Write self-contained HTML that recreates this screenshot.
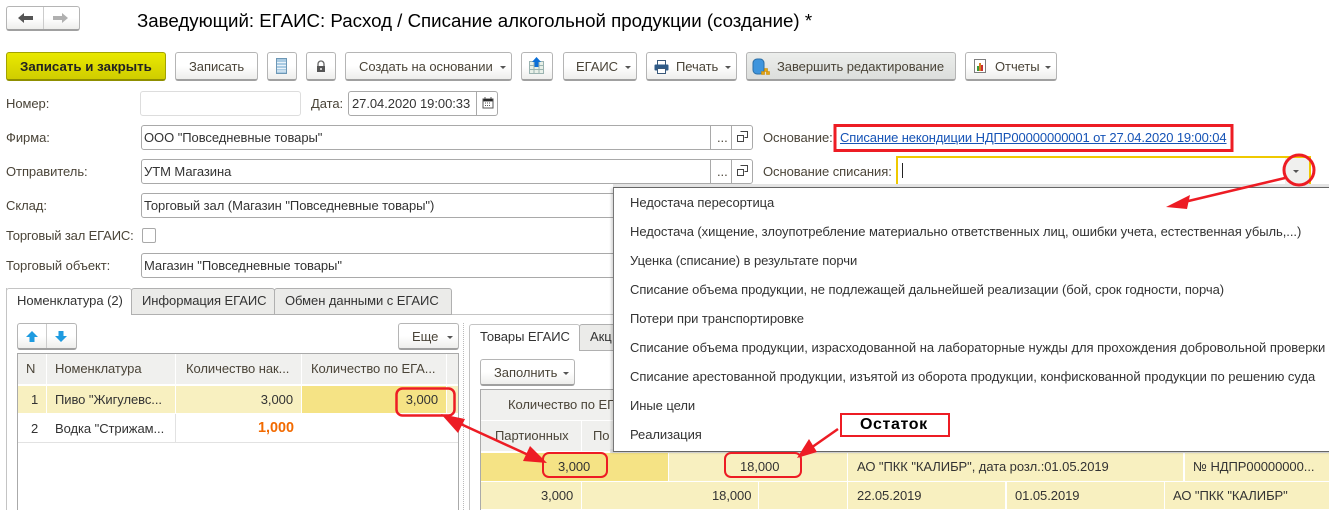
<!DOCTYPE html>
<html><head><meta charset="utf-8"><style>
html,body{margin:0;padding:0;background:#fff;}
#p{position:relative;width:1329px;height:510px;overflow:hidden;background:#fff;font-family:"Liberation Sans",sans-serif;font-size:13px;color:#4a4438;}
#p div,#p span.t{position:absolute;box-sizing:border-box;}
.t{white-space:nowrap;line-height:14px;letter-spacing:-.06px;}
.v{color:#333;}
.b{border:1px solid #b5b5b5;border-bottom:2px solid #a0a0a0;border-radius:3px;background:linear-gradient(#fff,#fff 50%,#eeeeec);}
.f{border:1px solid #a9a9a9;border-radius:3px;background:#fff;}
.d{width:1px;background:#a9a9a9;}
.h{background:#f0f0ee;}
.y{background:#f8f0c0;}
.s{background:#f5e385;}
.dn{width:0;height:0;border-left:3px solid transparent;border-right:3px solid transparent;border-top:3px solid #555;}
.tab{border:1px solid #b0b0b0;background:#ebebe9;border-radius:3px 3px 0 0;}
svg{position:absolute;}
</style></head><body><div id="p">

<!-- nav -->
<div class="b" style="left:6px;top:6px;width:74px;height:25px;"></div>
<div style="left:43px;top:7px;width:1px;height:22px;background:#ccc;"></div>
<svg style="left:18px;top:13px" width="16" height="10"><path d="M0 5L6 0V3H15V7H6V10Z" fill="#555"/></svg>
<svg style="left:53px;top:13px" width="16" height="10"><path d="M15 5L9 0V3H0V7H9V10Z" fill="#b0b0b0"/></svg>
<span class="t" style="left:137px;top:10px;font-size:18.7px;line-height:22px;color:#000;letter-spacing:0;">Заведующий: ЕГАИС: Расход / Списание алкогольной продукции (создание) *</span>

<!-- toolbar -->
<div style="left:6px;top:52px;width:160px;height:29px;border:1px solid #a3a300;border-bottom:2px solid #8f8f00;border-radius:3px;background:linear-gradient(#e9e900,#d0cd00);"></div>
<span class="t" style="left:20px;top:60px;font-weight:bold;font-size:13.3px;color:#222;letter-spacing:0;">Записать и закрыть</span>
<div class="b" style="left:175px;top:52px;width:83px;height:29px;"></div>
<span class="t" style="left:189px;top:60px;">Записать</span>
<div class="b" style="left:267px;top:52px;width:30px;height:29px;"></div>
<svg style="left:276px;top:58px" width="12" height="17"><rect x=".5" y=".5" width="10" height="15" fill="#a9cbe3" stroke="#6d97b5"/><path d="M1 4.5H10M1 7.5H10M1 10.5H10M1 13H10" stroke="#eaf3fa"/></svg>
<div class="b" style="left:306px;top:52px;width:30px;height:29px;"></div>
<svg style="left:315px;top:60px" width="12" height="13"><path d="M3 6V4A3 3 0 0 1 9 4V6" fill="none" stroke="#666" stroke-width="1.3"/><rect x="2" y="6" width="8" height="6" fill="#555"/><rect x="5" y="8" width="2" height="2" fill="#ccc"/></svg>
<div class="b" style="left:345px;top:52px;width:167px;height:29px;"></div>
<span class="t" style="left:359px;top:60px;">Создать на основании</span>
<div class="dn" style="left:500px;top:66px;"></div>
<div class="b" style="left:521px;top:52px;width:32px;height:29px;"></div>
<svg style="left:529px;top:57px" width="16" height="18"><rect x=".5" y="4.5" width="14" height="12" fill="#e8f0e8" stroke="#9ab3b0"/><path d="M1 8.5H14M1 12.5H14M5 5V16M10 5V16" stroke="#9ab3b0"/><path d="M7.5 0L12 5H9.5V10H5.5V5H3Z" fill="#0b6fd8"/></svg>
<div class="b" style="left:563px;top:52px;width:74px;height:29px;"></div>
<span class="t" style="left:576px;top:60px;">ЕГАИС</span>
<div class="dn" style="left:625px;top:66px;"></div>
<div class="b" style="left:646px;top:52px;width:91px;height:29px;"></div>
<svg style="left:654px;top:60px" width="15" height="14"><rect x="3.5" y=".5" width="8" height="5" fill="#fff" stroke="#39587a"/><rect x=".5" y="4.5" width="14" height="6" rx="1" fill="#2f5b88"/><rect x="3.5" y="8.5" width="8" height="5" fill="#fff" stroke="#39587a"/></svg>
<span class="t" style="left:676px;top:60px;">Печать</span>
<div class="dn" style="left:725px;top:66px;"></div>
<div class="b" style="left:746px;top:52px;width:210px;height:29px;background:linear-gradient(#eceeec,#dcdedc);"></div>
<svg style="left:752px;top:58px" width="18" height="18"><rect x="1" y="1" width="11" height="15" rx="4" fill="#3f95dd" stroke="#2b6ea6"/><path d="M12.500 10.500h3v3h-3zM9.500 13.500h3v3h-3zM14.500 13.500h3v3h-3z" fill="#e3a514" stroke="#c98a00" stroke-width=".6"/></svg>
<span class="t" style="left:777px;top:60px;">Завершить редактирование</span>
<div class="b" style="left:965px;top:52px;width:92px;height:29px;"></div>
<svg style="left:974px;top:59px" width="13" height="15"><rect x=".5" y=".5" width="11" height="13" fill="#fff" stroke="#7d7d7d"/><rect x="3" y="7" width="2" height="5" fill="#3a9a3a"/><rect x="5" y="4" width="2" height="8" fill="#d88020"/><rect x="7" y="6" width="2" height="6" fill="#c93030"/></svg>
<span class="t" style="left:995px;top:60px;">Отчеты</span>
<div class="dn" style="left:1045px;top:66px;"></div>

<!-- form labels -->
<span class="t" style="left:6px;top:97px;">Номер:</span>
<div style="left:140px;top:91px;width:161px;height:25px;border:1px solid #ddd;border-radius:3px;"></div>
<span class="t" style="left:311px;top:97px;">Дата:</span>
<div class="f" style="left:348px;top:91px;width:150px;height:25px;"></div>
<div class="d" style="left:476px;top:92px;height:23px;"></div>
<span class="t v" style="left:352px;top:97px;">27.04.2020 19:00:33</span>
<svg style="left:482px;top:97px" width="12" height="12"><rect x="1" y="2" width="10" height="9" fill="#fff" stroke="#555"/><path d="M1 2H11V4H1ZM3 0V2M9 0V2" stroke="#555"/><path d="M3 6H9M3 8.500H9" stroke="#555" stroke-dasharray="1 1"/></svg>

<span class="t" style="left:6px;top:131px;">Фирма:</span>
<div class="f" style="left:141px;top:125px;width:612px;height:25px;"></div>
<div class="d" style="left:710px;top:126px;height:23px;"></div><div class="d" style="left:731px;top:126px;height:23px;"></div>
<span class="t" style="left:717px;top:131px;">...</span>
<svg style="left:737px;top:131px" width="11" height="11"><path d="M3.500 .5H10.500V6.500H7.500M.5 4.500H6.500V10.500H.5Z" fill="none" stroke="#444"/></svg>
<span class="t v" style="left:144px;top:131px;">ООО "Повседневные товары"</span>

<span class="t" style="left:6px;top:165px;">Отправитель:</span>
<div class="f" style="left:141px;top:159px;width:612px;height:25px;"></div>
<div class="d" style="left:710px;top:160px;height:23px;"></div><div class="d" style="left:731px;top:160px;height:23px;"></div>
<span class="t" style="left:717px;top:165px;">...</span>
<svg style="left:737px;top:165px" width="11" height="11"><path d="M3.500 .5H10.500V6.500H7.500M.5 4.500H6.500V10.500H.5Z" fill="none" stroke="#444"/></svg>
<span class="t v" style="left:144px;top:165px;">УТМ Магазина</span>

<span class="t" style="left:6px;top:199px;">Склад:</span>
<div class="f" style="left:141px;top:193px;width:612px;height:25px;"></div>
<span class="t v" style="left:144px;top:199px;">Торговый зал (Магазин "Повседневные товары")</span>

<span class="t" style="left:6px;top:229px;letter-spacing:-.15px;">Торговый зал ЕГАИС:</span>
<div class="f" style="left:142px;top:228px;width:14px;height:15px;border-radius:2px;"></div>

<span class="t" style="left:6px;top:259px;">Торговый объект:</span>
<div class="f" style="left:141px;top:253px;width:612px;height:25px;"></div>
<span class="t v" style="left:144px;top:259px;">Магазин "Повседневные товары"</span>

<span class="t" style="left:763px;top:131px;">Основание:</span>
<span class="t" style="left:840px;top:131px;color:#1553b6;text-decoration:underline;letter-spacing:-.11px;">Списание некондиции НДПР00000000001 от 27.04.2020 19:00:04</span>
<span class="t" style="left:763px;top:165px;">Основание списания:</span>
<div style="left:896px;top:156px;width:415px;height:28px;border:2px solid #efc900;border-bottom:0;background:#fff;"></div>
<div style="left:902px;top:163px;width:1px;height:15px;background:#222;"></div>
<div style="left:1285px;top:158px;width:24px;height:26px;background:#f0f0ee;"></div>
<div class="dn" style="left:1293px;top:170px;"></div>

<!-- tabs -->
<div style="left:6px;top:314px;width:1323px;height:1px;background:#c4c4c4;"></div>
<div style="left:6px;top:288px;width:1px;height:222px;background:#c4c4c4;"></div>
<div style="left:6px;top:288px;width:126px;height:27px;border:1px solid #c4c4c4;border-bottom:0;border-radius:3px 3px 0 0;background:#fff;"></div>
<div class="tab" style="left:131px;top:288px;width:144px;height:27px;"></div>
<div class="tab" style="left:274px;top:288px;width:178px;height:27px;"></div>
<span class="t v" style="left:17px;top:294px;">Номенклатура (2)</span>
<span class="t v" style="left:142px;top:294px;">Информация ЕГАИС</span>
<span class="t v" style="left:285px;top:294px;">Обмен данными с ЕГАИС</span>

<div class="b" style="left:17px;top:323px;width:60px;height:27px;"></div>
<div style="left:46px;top:324px;width:1px;height:24px;background:#ccc;"></div>
<svg style="left:26px;top:331px" width="12" height="11"><path d="M6 0L12 6H8.500V11H3.500V6H0Z" fill="#1e9be0"/></svg>
<svg style="left:55px;top:331px" width="12" height="11"><path d="M6 11L12 5H8.500V0H3.500V5H0Z" fill="#1e9be0"/></svg>
<div class="b" style="left:398px;top:323px;width:61px;height:27px;"></div>
<span class="t" style="left:412px;top:330px;">Еще</span>
<div class="dn" style="left:447px;top:336px;"></div>

<!-- left table -->
<div style="left:17px;top:353px;width:442px;height:160px;border:1px solid #aaa;"></div>
<div class="h" style="left:18px;top:354px;width:28px;height:30px;"></div>
<div class="h" style="left:47px;top:354px;width:128px;height:30px;"></div>
<div class="h" style="left:176px;top:354px;width:125px;height:30px;"></div>
<div class="h" style="left:302px;top:354px;width:144px;height:30px;"></div>
<div class="h" style="left:447px;top:354px;width:11px;height:30px;"></div>
<span class="t" style="left:26px;top:362px;">N</span>
<span class="t" style="left:55px;top:362px;">Номенклатура</span>
<span class="t" style="left:186px;top:362px;">Количество нак...</span>
<span class="t" style="left:311px;top:362px;">Количество по ЕГА...</span>
<div class="y" style="left:18px;top:386px;width:28px;height:27px;"></div>
<div class="y" style="left:47px;top:386px;width:128px;height:27px;"></div>
<div class="y" style="left:176px;top:386px;width:125px;height:27px;"></div>
<div class="s" style="left:302px;top:386px;width:144px;height:27px;"></div>
<div class="y" style="left:447px;top:386px;width:11px;height:27px;"></div>
<span class="t v" style="left:31px;top:393px;">1</span>
<span class="t v" style="left:55px;top:393px;">Пиво "Жигулевс...</span>
<span class="t v" style="right:1036px;top:393px;">3,000</span>
<span class="t v" style="right:891px;top:393px;">3,000</span>
<div style="left:18px;top:442px;width:440px;height:1px;background:#e2e2e2;"></div>
<div style="left:175px;top:414px;width:1px;height:28px;background:#e2e2e2;"></div>
<span class="t v" style="left:31px;top:422px;">2</span>
<span class="t v" style="left:55px;top:422px;">Водка "Стрижам...</span>
<span class="t" style="right:1035px;top:421px;color:#f26a00;font-weight:bold;font-size:14.4px;letter-spacing:0;">1,000</span>

<!-- splitter -->
<div style="left:463px;top:323px;width:1px;height:187px;border-left:1px dotted #bbb;"></div>

<!-- right pane -->
<div style="left:469px;top:350px;width:860px;height:1px;background:#c4c4c4;"></div>
<div style="left:469px;top:350px;width:1px;height:160px;background:#c4c4c4;"></div>
<div style="left:469px;top:324px;width:111px;height:27px;border:1px solid #c4c4c4;border-bottom:0;border-radius:3px 3px 0 0;background:#fff;"></div>
<div class="tab" style="left:579px;top:324px;width:60px;height:27px;"></div>
<span class="t v" style="left:480px;top:330px;">Товары ЕГАИС</span>
<span class="t v" style="left:590px;top:330px;">Акц</span>
<div class="b" style="left:480px;top:359px;width:95px;height:27px;"></div>
<span class="t" style="left:494px;top:366px;">Заполнить</span>
<div class="dn" style="left:563px;top:372px;"></div>

<div style="left:480px;top:389px;width:860px;height:130px;border:1px solid #aaa;"></div>
<div class="h" style="left:481px;top:390px;width:200px;height:30px;"></div>
<div class="h" style="left:481px;top:421px;width:100px;height:30px;"></div>
<div class="h" style="left:582px;top:421px;width:100px;height:30px;"></div>
<span class="t" style="left:508px;top:398px;">Количество по ЕГАИС</span>
<span class="t" style="left:495px;top:429px;">Партионных</span>
<span class="t" style="left:593px;top:429px;">По</span>

<div class="s" style="left:481px;top:453px;width:187px;height:28px;"></div>
<div class="y" style="left:669px;top:453px;width:178px;height:28px;"></div>
<div class="y" style="left:848px;top:453px;width:335px;height:28px;"></div>
<div class="y" style="left:1185px;top:453px;width:144px;height:28px;"></div>
<div class="y" style="left:481px;top:482px;width:100px;height:27px;"></div>
<div class="y" style="left:582px;top:482px;width:176px;height:27px;"></div>
<div class="y" style="left:759px;top:482px;width:88px;height:27px;"></div>
<div class="y" style="left:848px;top:482px;width:157px;height:27px;"></div>
<div class="y" style="left:1007px;top:482px;width:157px;height:27px;"></div>
<div class="y" style="left:1165px;top:482px;width:164px;height:27px;"></div>
<span class="t v" style="left:558px;top:460px;">3,000</span>
<span class="t v" style="left:740px;top:460px;">18,000</span>
<span class="t v" style="left:857px;top:460px;">АО "ПКК "КАЛИБР", дата розл.:01.05.2019</span>
<span class="t v" style="left:1193px;top:460px;">№ НДПР00000000...</span>
<span class="t v" style="left:541px;top:489px;">3,000</span>
<span class="t v" style="left:712px;top:489px;">18,000</span>
<span class="t v" style="left:857px;top:489px;">22.05.2019</span>
<span class="t v" style="left:1015px;top:489px;">01.05.2019</span>
<span class="t v" style="left:1173px;top:489px;">АО "ПКК "КАЛИБР"</span>

<!-- dropdown -->
<div style="left:613px;top:184px;width:716px;height:3px;background:#e4e4e4;"></div>
<div style="left:610px;top:449px;width:719px;height:4px;background:#e6e6e6;"></div>
<div style="left:613px;top:187px;width:730px;height:265px;border:1px solid #666;border-left:1px solid #777;background:#fff;box-shadow:-2px 1px 2px rgba(0,0,0,.15);"></div>
<span class="t v" style="left:630px;top:196px;">Недостача пересортица</span>
<span class="t v" style="left:630px;top:225px;">Недостача (хищение, злоупотребление материально ответственных лиц, ошибки учета, естественная убыль,...)</span>
<span class="t v" style="left:630px;top:254px;">Уценка (списание) в результате порчи</span>
<span class="t v" style="left:630px;top:283px;">Списание объема продукции, не подлежащей дальнейшей реализации (бой, срок годности, порча)</span>
<span class="t v" style="left:630px;top:312px;">Потери при транспортировке</span>
<span class="t v" style="left:630px;top:341px;letter-spacing:-.03px;">Списание объема продукции, израсходованной на лабораторные нужды для прохождения добровольной проверки</span>
<span class="t v" style="left:630px;top:370px;letter-spacing:-.03px;">Списание арестованной продукции, изъятой из оборота продукции, конфискованной продукции по решению суда</span>
<span class="t v" style="left:630px;top:399px;">Иные цели</span>
<span class="t v" style="left:630px;top:428px;">Реализация</span>

<!-- annotations -->
<svg style="left:0;top:0;overflow:visible" width="1329" height="510" fill="none" stroke="#ed1c24">
<rect x="835" y="125.500" width="397" height="25" stroke-width="3"/>
<circle cx="1299" cy="170" r="15" stroke-width="3"/>
<rect x="396.500" y="388.500" width="58" height="27" rx="6" stroke-width="2.500"/>
<rect x="543" y="453" width="64" height="24" rx="6" stroke-width="2"/>
<rect x="725" y="453" width="76" height="24" rx="6" stroke-width="2"/>
<path d="M1285 178L1180 203" stroke-width="2.500"/>
<path d="M1166 207L1190 195L1187 209Z" fill="#ed1c24" stroke="none"/>
<path d="M452 420L535 458" stroke-width="2.500"/>
<path d="M441 414L465 419L458 433Z" fill="#ed1c24" stroke="none"/>
<path d="M547 463L523 461L530 446Z" fill="#ed1c24" stroke="none"/>
<path d="M838 429L808 450" stroke-width="2.500"/>
<path d="M797 458L809 439L817 452Z" fill="#ed1c24" stroke="none"/>
</svg>
<div style="left:840px;top:413px;width:110px;height:24px;border:2px solid #ed1c24;background:#fff;"></div>
<span class="t" style="left:860px;top:416px;font-weight:bold;font-size:16px;line-height:18px;color:#000;letter-spacing:.6px;">Остаток</span>
</div></body></html>
